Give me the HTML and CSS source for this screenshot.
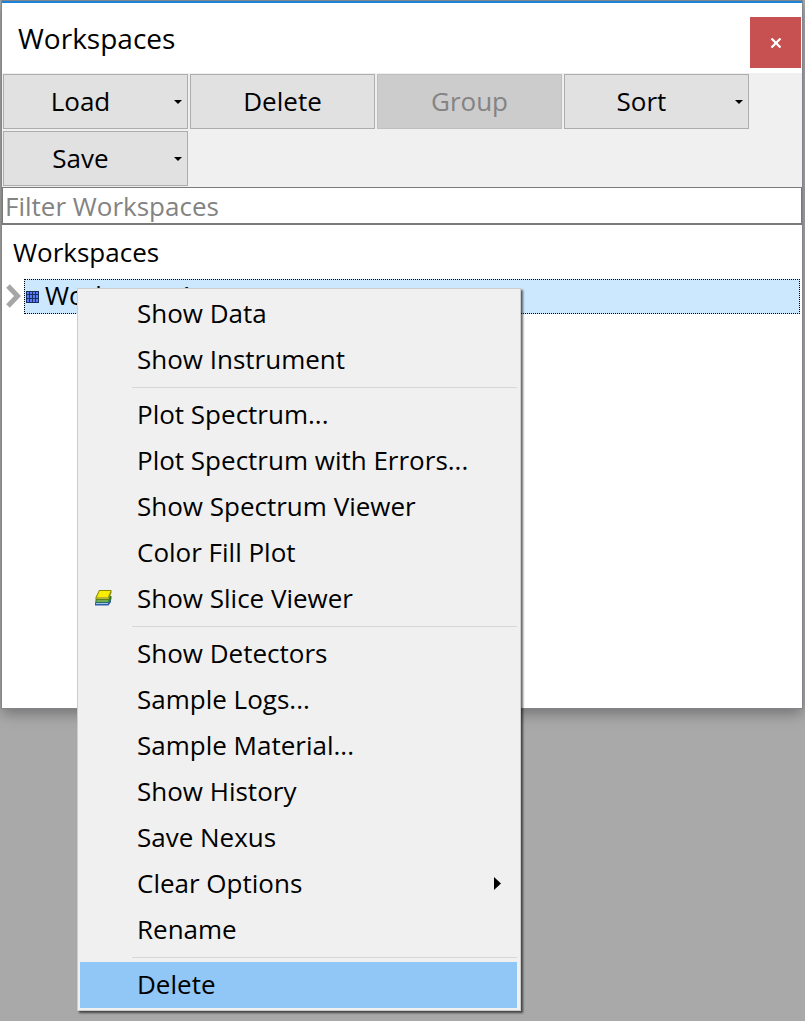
FILE: index.html
```html
<!DOCTYPE html>
<html lang="en">
<head>
<meta charset="utf-8">
<title>Workspaces</title>
<link rel="stylesheet" href="styles.css">
</head>
<body>
<main class="dock">
  <header class="titlebar">
    <h1 class="title">Workspaces</h1>
    <button class="close" type="button" aria-label="Close">
      <svg width="12" height="10" viewBox="0 0 12 10"><path d="M1.5 .5 10.5 9.5M10.5 .5 1.5 9.5" stroke="#fff" stroke-width="2.2" fill="none"/></svg>
    </button>
  </header>
  <div class="toolbar">
    <button class="tool has-menu" type="button"><span class="tool-label">Load</span><svg class="caret" width="8" height="4" viewBox="0 0 8 4"><path d="M0 0h8L4 4z"/></svg></button>
    <button class="tool" type="button"><span class="tool-label">Delete</span></button>
    <button class="tool" type="button" disabled><span class="tool-label">Group</span></button>
    <button class="tool has-menu" type="button"><span class="tool-label">Sort</span><svg class="caret" width="8" height="4" viewBox="0 0 8 4"><path d="M0 0h8L4 4z"/></svg></button>
    <button class="tool has-menu" type="button"><span class="tool-label">Save</span><svg class="caret" width="8" height="4" viewBox="0 0 8 4"><path d="M0 0h8L4 4z"/></svg></button>
  </div>
  <input class="filter" type="text" placeholder="Filter Workspaces" aria-label="Filter Workspaces">
  <section class="tree">
    <h2 class="tree-header">Workspaces</h2>
    <div class="tree-row">
      <svg class="expander" width="22" height="34" viewBox="0 0 22 34"><path d="M6 7 15.500 17 6 27" stroke="#a6a6a6" stroke-width="5" fill="none"/></svg>
      <div class="tree-item">
        <svg width="13" height="12" viewBox="0 0 13 12"><path fill="#5b7cf5" d="M0 0h13v12H0z"/><path d="M.5 0v12M3.500 0v12M6.500 0v12M9.500 0v12M12.500 0v12M0 .5h13M0 3.500h13M0 7.500h13M0 11.500h13" stroke="#17305f"/></svg>
        <span class="tree-name">Workspace1</span>
      </div>
      <div class="menu" role="menu">
        <button class="item" type="button" role="menuitem">Show Data</button>
        <button class="item" type="button" role="menuitem">Show Instrument</button>
        <hr class="sep">
        <button class="item" type="button" role="menuitem">Plot Spectrum...</button>
        <button class="item" type="button" role="menuitem">Plot Spectrum with Errors...</button>
        <button class="item" type="button" role="menuitem">Show Spectrum Viewer</button>
        <button class="item" type="button" role="menuitem">Color Fill Plot</button>
        <button class="item" type="button" role="menuitem">
          <svg class="item-icon" width="17" height="16" viewBox="0 0 17 16">
            <path fill="#2b5fa8" d="M2 9h14v3l-2.500 3.500H0V13z"/><path fill="#9fc3e8" d="M1 13h12v1H1z"/>
            <path fill="#2f7a2c" d="M2 6h14.500v3L14 12.500H.5V10z"/><path fill="#b5dc78" d="M1.500 10.500h12v1h-12z"/>
            <path fill="#8a8a00" d="M4 0h12.500v2.500L14 9.500H.5V7.500z"/><path fill="#f8ef00" d="M4.500 1H15.500L13 7H2z"/><path fill="#e5e06a" d="M1.500 7.500h12v1h-12z"/>
          </svg>Show Slice Viewer</button>
        <hr class="sep">
        <button class="item" type="button" role="menuitem">Show Detectors</button>
        <button class="item" type="button" role="menuitem">Sample Logs...</button>
        <button class="item" type="button" role="menuitem">Sample Material...</button>
        <button class="item" type="button" role="menuitem">Show History</button>
        <button class="item" type="button" role="menuitem">Save Nexus</button>
        <button class="item" type="button" role="menuitem" aria-haspopup="true">Clear Options<svg class="submenu" width="7" height="13" viewBox="0 0 7 13"><path d="M0 0v13L7 6.500z"/></svg></button>
        <button class="item" type="button" role="menuitem">Rename</button>
        <hr class="sep">
        <button class="item active" type="button" role="menuitem">Delete</button>
      </div>
    </div>
  </section>
</main>
</body>
</html>
```
FILE: styles.css
```css
* { box-sizing: border-box; }
body {
  margin: 0;
  padding: 1px 3px 10px 2px;
  min-height: 100vh;
  background: #a9a9a9;
  color: #000;
  font: 26px/34px "Open Sans", "Noto Sans", sans-serif;
}
button, input { font: inherit; color: inherit; margin: 0; }
h1, h2 { margin: 0; font-weight: 400; }
.dock {
  background: #f0f0f0;
  border-top: 2px solid #1c84d8;
  box-shadow: 0 0 0 1px #83858b, 0 5px 14px rgba(0, 0, 0, .35);
}
.titlebar {
  display: flex;
  justify-content: space-between;
  height: 70px;
  padding: 14px 1px 0 16px;
  background: #fff;
}
.title { font-size: 28px; line-height: 42px; }
.close {
  display: grid;
  place-items: center;
  width: 51px;
  height: 51px;
  padding: 0;
  border: 0;
  background: #c75050;
}
.toolbar {
  display: flex;
  flex-wrap: wrap;
  gap: 2px;
  padding: 1px;
}
.tool {
  display: flex;
  align-items: center;
  width: 185px;
  height: 55px;
  padding: 0 5px;
  border: 1px solid #adadad;
  background: #e1e1e1;
}
.tool:disabled { background: #ccc; border-color: #bfbfbf; color: #838383; }
.tool-label { flex: 1; padding-bottom: 2px; text-align: center; }
.has-menu .tool-label { padding-right: 22px; }
.filter {
  display: block;
  width: 100%;
  height: 38px;
  padding: 2px;
  border: 1px solid #7a7a7a;
  border-bottom-width: 2px;
  background: #fff;
}
.filter::placeholder { color: #838383; opacity: 1; }
.tree {
  min-height: 483px;
  padding: 10px 2px 0 0;
  background: #fff;
}
.tree-header {
  padding-left: 11px;
  margin-bottom: 10px;
  font-size: inherit;
}
.tree-row { position: relative; display: flex; height: 35px; }
.expander { flex: none; }
.tree-item {
  flex: 1;
  display: flex;
  align-items: center;
  gap: 6px;
  padding: 0 1px;
  background: #cce8ff;
  border: 1px dotted #000;
}
.tree-name { padding-bottom: 4px; }
.menu {
  position: absolute;
  top: 9px;
  left: 75px;
  width: 444px;
  padding: 2px 3px 2px 2px;
  background: #f0f0f0;
  border: 1px solid #ccc;
  box-shadow: 2px 2px 2px rgba(0, 0, 0, .6);
}
.item {
  position: relative;
  display: flex;
  align-items: center;
  width: 100%;
  height: 46px;
  padding: 0 16px 2px 57px;
  border: 0;
  background: none;
  text-align: left;
  white-space: nowrap;
}
.item.active { background: #91c7f6; }
.item-icon { position: absolute; left: 15px; }
.submenu { margin-left: auto; }
.sep {
  height: 1px;
  margin: 4px 0 4px 52px;
  border: 0;
  background: #d7d7d7;
}
```
